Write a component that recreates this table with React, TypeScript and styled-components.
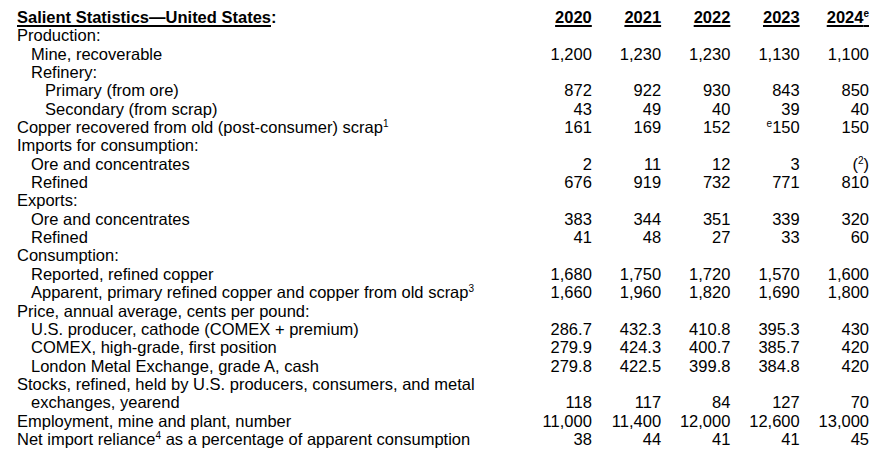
import React from "react";
import styled, { createGlobalStyle } from "styled-components";

const Global = createGlobalStyle`
  html, body { margin: 0; padding: 0; background: #fff; }
  body { font-family: "Liberation Sans", Arial, sans-serif; color: #000; }
`;

const Page = styled.div`
  width: 891px;
  padding: 8px 22px 0 17px;
  box-sizing: border-box;
  font-size: 16.5px;
  line-height: 18.35px;
`;

const Row = styled.div`
  display: grid;
  grid-template-columns: 1fr repeat(5, 69.3px);
  align-items: end;
`;

const Label = styled.div<{ $indent: number }>`
  padding-left: ${(p) => p.$indent * 14}px;
  white-space: nowrap;
`;

const Hanging = styled.span`
  display: block;
  padding-left: 14px;
`;

const Cell = styled.div`
  text-align: right;
  white-space: nowrap;
`;

const HeadTitle = styled.span`
  font-weight: bold;
`;

const U = styled.span`
  text-decoration: underline;
  text-decoration-thickness: 1.5px;
  text-underline-offset: 2px;
`;

const YearCell = styled(Cell)`
  font-weight: bold;
`;

const Sup = styled.sup`
  font-size: 10px;
  line-height: 0;
  vertical-align: 6px;
`;

type RowData = {
  label: React.ReactNode;
  indent: number;
  values?: React.ReactNode[];
};

const rows: RowData[] = [
  { label: "Production:", indent: 0 },
  { label: "Mine, recoverable", indent: 1, values: ["1,200", "1,230", "1,230", "1,130", "1,100"] },
  { label: "Refinery:", indent: 1 },
  { label: "Primary (from ore)", indent: 2, values: ["872", "922", "930", "843", "850"] },
  { label: "Secondary (from scrap)", indent: 2, values: ["43", "49", "40", "39", "40"] },
  {
    label: (
      <>
        Copper recovered from old (post-consumer) scrap<Sup>1</Sup>
      </>
    ),
    indent: 0,
    values: [
      "161",
      "169",
      "152",
      <>
        <Sup>e</Sup>150
      </>,
      "150",
    ],
  },
  { label: "Imports for consumption:", indent: 0 },
  {
    label: "Ore and concentrates",
    indent: 1,
    values: [
      "2",
      "11",
      "12",
      "3",
      <>
        (<Sup>2</Sup>)
      </>,
    ],
  },
  { label: "Refined", indent: 1, values: ["676", "919", "732", "771", "810"] },
  { label: "Exports:", indent: 0 },
  { label: "Ore and concentrates", indent: 1, values: ["383", "344", "351", "339", "320"] },
  { label: "Refined", indent: 1, values: ["41", "48", "27", "33", "60"] },
  { label: "Consumption:", indent: 0 },
  { label: "Reported, refined copper", indent: 1, values: ["1,680", "1,750", "1,720", "1,570", "1,600"] },
  {
    label: (
      <>
        Apparent, primary refined copper and copper from old scrap<Sup>3</Sup>
      </>
    ),
    indent: 1,
    values: ["1,660", "1,960", "1,820", "1,690", "1,800"],
  },
  { label: "Price, annual average, cents per pound:", indent: 0 },
  { label: "U.S. producer, cathode (COMEX + premium)", indent: 1, values: ["286.7", "432.3", "410.8", "395.3", "430"] },
  { label: "COMEX, high-grade, first position", indent: 1, values: ["279.9", "424.3", "400.7", "385.7", "420"] },
  { label: "London Metal Exchange, grade A, cash", indent: 1, values: ["279.8", "422.5", "399.8", "384.8", "420"] },
  {
    label: (
      <>
        Stocks, refined, held by U.S. producers, consumers, and metal
        <Hanging>exchanges, yearend</Hanging>
      </>
    ),
    indent: 0,
    values: ["118", "117", "84", "127", "70"],
  },
  { label: "Employment, mine and plant, number", indent: 0, values: ["11,000", "11,400", "12,000", "12,600", "13,000"] },
  {
    label: (
      <>
        Net import reliance<Sup>4</Sup> as a percentage of apparent consumption
      </>
    ),
    indent: 0,
    values: ["38", "44", "41", "41", "45"],
  },
];

const years: React.ReactNode[] = [
  "2020",
  "2021",
  "2022",
  "2023",
  <>
    2024<Sup>e</Sup>
  </>,
];

export default function App() {
  return (
    <>
      <Global />
      <Page>
        <Row>
          <Label $indent={0}>
            <HeadTitle>
              <U>Salient Statistics—United States</U>:
            </HeadTitle>
          </Label>
          {years.map((y, i) => (
            <YearCell key={i}>
              <U>{y}</U>
            </YearCell>
          ))}
        </Row>
        {rows.map((r, i) => (
          <Row key={i}>
            <Label $indent={r.indent}>{r.label}</Label>
            {r.values?.map((v, j) => (
              <Cell key={j}>{v}</Cell>
            ))}
          </Row>
        ))}
      </Page>
    </>
  );
}
